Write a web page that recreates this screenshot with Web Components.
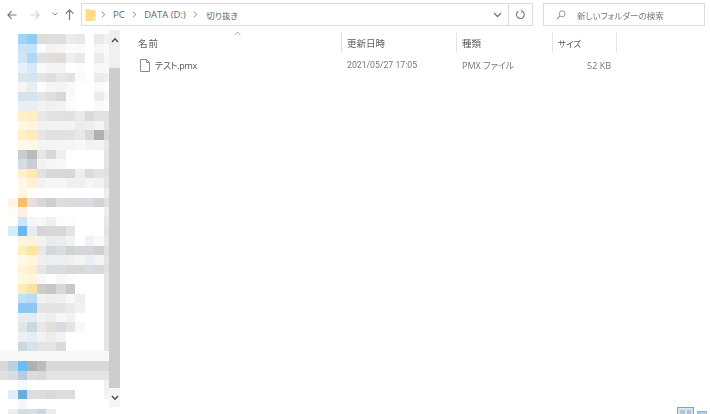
<!DOCTYPE html>
<html><head><meta charset="utf-8"><style>
html,body{margin:0;padding:0;width:710px;height:414px;overflow:hidden;background:#fff}
body{font:10px "Open Sans","Noto Sans CJK JP",sans-serif;color:#555}
</style></head><body>
<explorer-window>
  <nav-bar slot="top" path="PC|DATA (D:)|切り抜き" placeholder="新しいフォルダーの検索"></nav-bar>
  <mosaic-pane slot="side"></mosaic-pane>
  <file-list slot="main">
    <file-row name="テスト.pmx" date="2021/05/27 17:05" type="PMX ファイル" size="52 KB"></file-row>
  </file-list>
</explorer-window>
<script>
const FONT='"Open Sans","Noto Sans CJK JP",sans-serif';
customElements.define('explorer-window',class extends HTMLElement{constructor(){super();this.attachShadow({mode:'open'}).innerHTML=`<style>
:host{display:flex;flex-direction:column;width:710px;height:414px;overflow:hidden;background:#fff}
.body{flex:1;display:flex;min-height:0}
</style><slot name="top"></slot><div class="body"><slot name="side"></slot><slot name="main"></slot></div>`}});

customElements.define('nav-bar',class extends HTMLElement{constructor(){super();this.attachShadow({mode:'open'})}
connectedCallback(){
const chev='<svg class="sep" width="5" height="7" viewBox="0 0 5 7"><path d="M1 .8 3.8 3.5 1 6.2" fill="none" stroke="#8a8a8a" stroke-width="1"/></svg>';
const parts=this.getAttribute('path').split('|');
this.shadowRoot.innerHTML=`<style>
:host{display:flex;align-items:center;height:30px;box-sizing:border-box;padding:3px 5px 4px 6px;flex:none;font:9.5px ${FONT};color:#666;font-feature-settings:"palt";filter:blur(.25px)}
svg{display:block;flex:none}
.addr{margin-left:7px;width:452px;height:23px;box-sizing:border-box;border:1px solid #dcdcdc;display:flex;align-items:center;background:#fff}
.crumbs{flex:1;display:flex;align-items:center;padding-left:3px;white-space:nowrap}
.crumbs span{margin:0 7.5px 0 7px}
.crumbs span:last-child{font-size:8.5px;margin-left:8px}
.dd{width:22px;display:flex;justify-content:center}
.rf{width:23px;height:100%;border-left:1px solid #dcdcdc;display:flex;align-items:center;justify-content:center}
.search{margin-left:10px;flex:1;height:23px;box-sizing:border-box;border:1px solid #dcdcdc;display:flex;align-items:center;padding-left:12px;color:#777;font-size:8.5px}
.search span{margin-left:11px}
</style>
<svg width="10" height="10" viewBox="0 0 10 10" style="margin-left:1px"><path d="M9.5 5H1M4.6 1.2 1 5l3.6 3.8" fill="none" stroke="#777" stroke-width="1.2"/></svg>
<svg width="10" height="10" viewBox="0 0 10 10" style="margin-left:13px"><path d="M.5 5H9M5.4 1.2 9 5 5.4 8.8" fill="none" stroke="#d4d4d4" stroke-width="1.2"/></svg>
<svg width="6" height="4" viewBox="0 0 6 4" style="margin-left:12px;margin-top:-2px"><path d="M.5.7 3 3 5.5.7" fill="none" stroke="#888" stroke-width="1"/></svg>
<svg width="9" height="11" viewBox="0 0 9 11" style="margin-left:7px"><path d="M4.5 11V1M.7 4.6l3.8-3.8 3.8 3.8" fill="none" stroke="#777" stroke-width="1.2"/></svg>
<div class="addr"><div class="crumbs">
<svg width="11" height="14" viewBox="0 0 11 14"><path d="M.5 1h4l1 1h5V13H.5z" fill="#fddc85"/><path d="M8 9h2.5v4H8z" fill="#f8e8b8"/></svg>
<svg class="sep" width="5" height="7" viewBox="0 0 5 7" style="margin-left:5px"><path d="M1 .8 3.8 3.5 1 6.2" fill="none" stroke="#8a8a8a"/></svg>
${parts.map((p,i)=>`<span>${p}</span>${i<parts.length-1?chev:''}`).join('')}
</div>
<div class="dd"><svg width="9" height="6" viewBox="0 0 9 6"><path d="M1 1l3.5 3.5L8 1" fill="none" stroke="#777" stroke-width="1.3"/></svg></div>
<div class="rf"><svg width="11" height="11" viewBox="0 0 11 11"><path d="M7.2 2.2A3.9 3.9 0 1 1 3.4 2.3" fill="none" stroke="#777" stroke-width="1.1"/><path d="M6 .4 7.6 2.2 5.8 3.8" fill="none" stroke="#777"/></svg></div>
</div>
<div class="search"><svg width="10" height="10" viewBox="0 0 10 10"><circle cx="6.2" cy="3.8" r="3" fill="none" stroke="#999"/><path d="M4 6 .8 9.2" stroke="#999" stroke-width="1.1"/></svg><span>${this.getAttribute('placeholder')}</span></div>`;
}});

const W='fff';
const M=[
[W,W,'9fd3f8','8fcdf7','dcdcdc','dedede','dedede','ececec','e8e8e8',W,'e6ecec','f2f2f2'],
[W,W,'c9e5f9','c5e3f9','fbfbfb','f3f3f3','f5f5f5','fafafa','fafafa',W,'f6f6f6','fafafa'],
[W,W,'d0e5f5','b0d8f3','e0e0e0','dfdfdf','e2dcd8','eef0f0','e8e8e8',W,'e8eded','f8f8f8'],
[W,W,'e6f2fb','d4e9fb','fafafa','f5f5f5','f5f5f5',W,'fcfcfc',W,'f8f8f8','fafafa'],
[W,W,'dbe6ec','d6e4ee','e4e4e4','dedede','e5e7e7','e2e2e2','fafafa',W,'eaeaea','f0f0f0'],
[W,W,'f5f5f5','ebeded','fcfcfc','f5f5f5','f4f4f4','f8f8f8',W,W,'fafafa','fcfcfc'],
[W,W,'d4e2ea','d4e5f0','e5e5e5','dfdfdf','d8d8d8','fafafa',W,W,'e8eef0','f8f8f8'],
[W,W,'ebeff3','e8eef2','f2f2f2','f0f0f0','f2f2f2','fcfcfc',W,W,'fafafa','fcfcfc'],
[W,W,'fff0c8','ffeec0','e8e8e8','e4e2de','dfe2e4','e2e0dc','eaeaea','d8dbdb','e2e2e2','e4dede'],
[W,W,'fff8e6','fff5dc','f2f2f2','f2f2f2','f2f2f2','f4f4f4','ececec','eeeeee','f4f4f4','e4e4e4'],
[W,W,'ffefc4','ffeaba','e6e6e6','e2e0dc','dfe2e4','e2e2e0','e8e8e8','d8d8d8','b0b0b0','d8d8d8'],
[W,W,'fff9ea','fff8e6','f4f4f4','f4f4f4','f6f6f6','f6f6f6','f8f8f8','f2f2f2','f4f4f4','e8e8e8'],
[W,W,'c8cccf','b8bcbc','e6e6e6','d8d8d8','eef0f0',W,W,W,W,'e4e4e4'],
[W,W,'d4dde6','c8ced2','f2f2f2','f6f6f6','f8f8f8',W,W,W,W,'e4e4e4'],
[W,W,'fff0cc','ffe9b4','e2e2e2','d8d8d8','d8d8d8','d8d8d8','eeeeee','dcdcdc','e4e4e4','e0e0e0'],
[W,W,'fff8e8','fff0d0','f2f2f2','f6f6f6','f6f6f6','f0f0f0','f0f0f0','f6f6f6','f2f2f2','e4e4e4'],
[W,W,'fff6e6',W,W,W,W,W,W,W,W,'eeeeee'],
[W,'fff6e8','fcbc70','e8dede','d8d8d8','ccd0d0','dcdcdc','dcd8dc','d8dce0','d8dcdc','d8d0d8','e0e0e0'],
[W,'fffcf6','fcf0e0',W,W,W,W,W,W,W,W,'eeeeee'],
[W,W,'cfe5f8','f5f6f6','f8f8f8','f0f0f0','fcfcfc','fdfdfd',W,W,W,'e8e8e8'],
[W,'d4ecfa','6cb8f2','e4edf0','d8d4d8','d8d8d8','d8d8d8','e4e4e4',W,W,W,'e4e4e4'],
[W,W,'fff5dc','fff2d8','f2f2f2','e8ecec','ececec','f2f2f2',W,'f2f2f2','f8f8f8','e8e8e8'],
[W,W,'fcefbe','fae69c','e8e8e8','d4d8dc','dcdcdc','cfd2d2','d4d6da','d4d6da','d4cfcf','e0e0e0'],
[W,W,'fffae8','fff6dc','f0f0f0','ecefef','eeeeee','f0f0f0','f4f4f4','eceff2','f4f4f4','e4e4e4'],
[W,W,'fff4d8','ffefca','e6e6e6','d8dce0','dcdcdc','d8d8d8','d8d8d8','d8dce4','d8d8d8','e0e0e0'],
[W,W,'fff8e0','fff5d8','f8f8f8',W,'f8f8f8','fcfcfc',W,W,W,'e4e4e4'],
[W,W,'fcecb8','fae2a0','d0cccc','c4c8c8','d8d8d4','c8c8c8',W,W,W,'e4e4e4'],
[W,W,'c0e0f8','b8dcf8','f2f2f2','efefef','f0f0f0','f8f8f8','eeeeee',W,W,'e4e4e4'],
[W,W,'8cc8f4','8cc8f2','e4e4e4','e4e4e4','e4e4e4','eaeaea','f2f2f2',W,W,'e4e4e4'],
[W,W,'e8ecf4','e6edf2','f2f2f2','eeeeee','f6f6f6','f2f2f2',W,W,W,'e4e4e4'],
[W,W,'dfe6e6','c8dae0','e8e8e8','e0e0dc','d8dce0','e4e4e4','f8f8f8',W,W,'e4e4e4'],
[W,W,'ecf0f6','e4ecf6','f2f2f2','ececec','f2f2f2',W,W,W,W,'e4e4e4'],
[W,W,'ccd8dc','d4e2ec','e4e4e4','e4e4e4','d8dcd8',W,W,W,W,'e4e4e4'],
Array(12).fill('f8f8f8'),
['d8d8d8','bcd0e0','6cbcf4','b0b0b0','bcbcbc','d8d8d8','d8d8d8','d8d8d8','d8d8d8','d8d8d8','d8d8d8','d8d8d8'],
['e0e0e0','d8dce0','bccbd8','dcdcdc','d8d8d4','e4e4e4','e4e4e4','e4e4e4','e4e4e4','e4e4e4','e4e4e4','e4e4e4'],
[W,W,'f4f8fc',W,W,W,W,W,W,W,W,'f0f0f0'],
[W,'e0ecf8','68aedc','dcdcdc','dcdcdc','d8d8d8','dcdcdc','dcdcdc',W,W,W,'f4f4f4'],
[W,W,'f4f8fc',W,W,W,W,W,W,W,W,W],
[W,'eeeeee','d4dce4','d8dce4','d0d4d8','e8eef0',W,W,W,W,W,W]
];
customElements.define('mosaic-pane',class extends HTMLElement{constructor(){super();
const cells=M.flat().map(c=>`<i style="background:#${c}"></i>`).join('');
this.attachShadow({mode:'open'}).innerHTML=`<style>
:host{display:flex;flex:none;width:120px;height:384px;box-sizing:border-box;overflow:hidden}
.m{flex:none;width:109px;padding-top:4.2px;display:grid;grid-template-columns:8.1px repeat(10,9.6px) 5px;grid-auto-rows:9.62px;align-content:start;filter:blur(.3px)}
i{display:block}
.sb{flex:none;width:11px;height:377px;background:#f0f0f0;display:flex;flex-direction:column}
.btn{flex:none;display:flex;align-items:center;justify-content:center;}
.thumb{flex:1;background:#cdcdcd}
svg{display:block}
</style><div class="m">${cells}</div><div class="sb">
<div class="btn" style="height:38px;align-items:flex-start"><svg style="margin-top:7px" width="8" height="6" viewBox="0 0 8 6"><path d="M1 5 4 1.8 7 5" fill="none" stroke="#505050" stroke-width="1.5"/></svg></div>
<div class="thumb"></div>
<div class="btn" style="height:19px;background:#f5f5f5"><svg width="8" height="6" viewBox="0 0 8 6"><path d="M1 1 4 4.2 7 1" fill="none" stroke="#505050" stroke-width="1.5"/></svg></div>
</div>`}});

customElements.define('file-list',class extends HTMLElement{constructor(){super();this.attachShadow({mode:'open'}).innerHTML=`<style>
:host{display:flex;flex-direction:column;flex:1;min-width:0;height:384px;position:relative;font:9.5px ${FONT};font-feature-settings:"palt"}
.head{display:grid;grid-template-columns:209px 115px 96px 64px;margin:2px 0 0 13px;height:21px;position:relative;color:#5c5c5c;filter:blur(.25px)}
.head div{border-right:1px solid #e4e4e4;padding-left:5px;display:flex;align-items:center;box-sizing:border-box}
.head div:first-child{letter-spacing:1px}
.head div:nth-child(4){font-size:8.5px}
.caret{position:absolute;left:101px;top:-1px}
.rows{flex:1;padding-top:2px;filter:blur(.25px)}
.views{display:flex;justify-content:flex-end;gap:3px;padding-right:3px;height:7px;overflow:hidden}
.v1{width:17px;height:14px;border:1px solid #5aaee0;background:#cfe8f8;box-sizing:border-box;padding:2px;display:flex;gap:2px}
.v1 b{flex:1;background:#b8c4cc}
.v2{width:10px;height:14px;border:1px solid #aaa;margin-top:4px;background:#a8d4f4;box-sizing:border-box}
</style>
<div class="head"><div>名前</div><div>更新日時</div><div>種類</div><div>サイズ</div>
<svg class="caret" width="7" height="5" viewBox="0 0 7 5"><path d="M.7 4.2 3.5 1 6.3 4.2" fill="none" stroke="#aaa"/></svg></div>
<div class="rows"><slot></slot></div>
<div class="views"><div class="v1"><b></b><b></b></div><div class="v2"></div></div>`}});

customElements.define('file-row',class extends HTMLElement{constructor(){super();this.attachShadow({mode:'open'})}
connectedCallback(){const a=n=>this.getAttribute(n);
this.shadowRoot.innerHTML=`<style>
:host{display:grid;grid-template-columns:209px 115px 96px 64px;margin-left:13px;height:20px;align-items:center;color:#777;font-size:9px;font-feature-settings:"palt"}
.n{display:flex;align-items:center;padding-left:7px;color:#555;font-size:9px;letter-spacing:-.3px}
.n svg{display:block;margin-right:5px}
.c{padding-left:5px}.d{font-family:Roboto,sans-serif;font-size:8.7px}.s{text-align:right;padding-right:6px}
</style><div class="n"><svg width="10" height="13" viewBox="0 0 10 13"><path d="M.5.5h6l3 3v9H.5z" fill="#fff" stroke="#8a8a8a"/><path d="M6.5.5v3h3" fill="none" stroke="#8a8a8a"/></svg><span>${a('name')}</span></div>
<div class="c d">${a('date')}</div><div class="c">${a('type')}</div><div class="s">${a('size')}</div>`}});
</script>
</body></html>
